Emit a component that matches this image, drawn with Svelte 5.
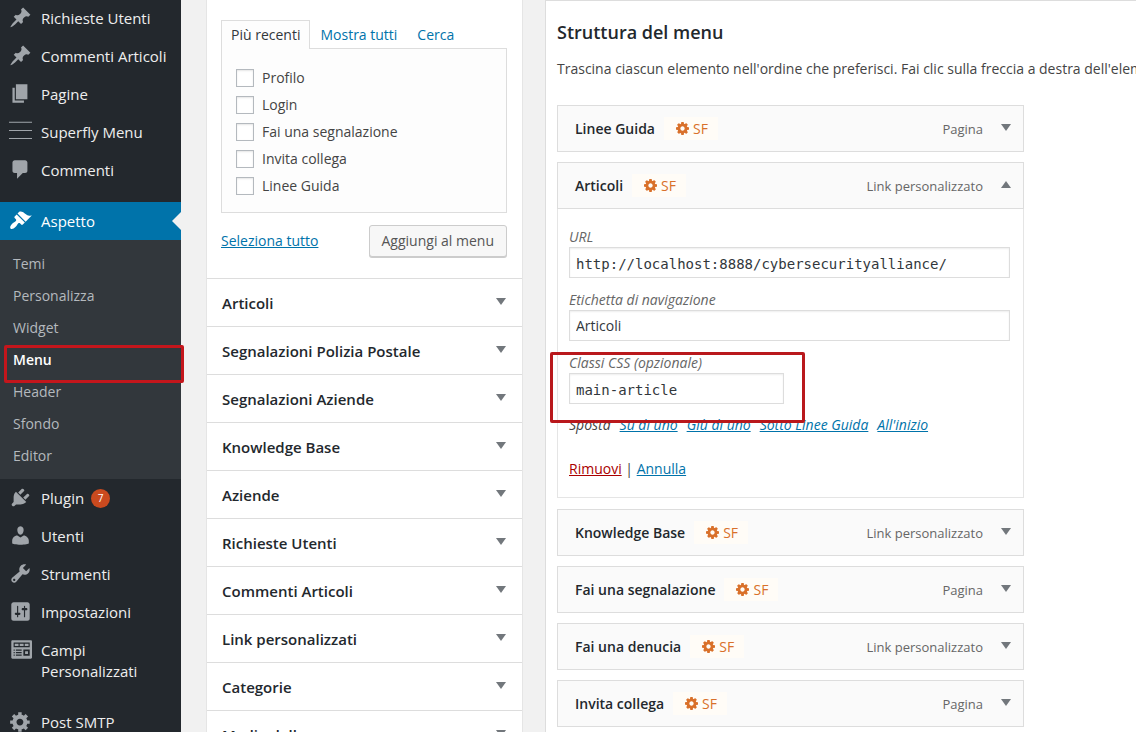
<script>
  const icons = {
    pin: 'M10.44 3.02l1.82-1.82 6.36 6.35-1.83 1.82c-1.05-.68-2.48-.57-3.41.36l-.75.75c-.92.93-1.04 2.35-.35 3.41l-1.83 1.82-2.41-2.41-2.8 2.79c-.42.42-3.38 2.71-3.8 2.29s1.86-3.39 2.28-3.81l2.79-2.79L4.1 9.36l1.83-1.82c1.05.69 2.48.57 3.4-.36l.75-.75c.93-.92 1.05-2.35.36-3.41z',
    page: 'M6 15V2h10v13H6zm-1 1h8v2H3V5h2v11z',
    lines: 'M0 1.5h20v.9H0zM0 8.6h20v.9H0zM0 15.7h20v.9H0z',
    comment: 'M5 2h9c1.1 0 2 .9 2 2v7c0 1.1-.9 2-2 2h-2l-5 5v-5H5c-1.1 0-2-.9-2-2V4c0-1.1.9-2 2-2z',
    brush: 'M14.48 11.06L7.41 3.99l1.5-1.5c.5-.56 2.3-.47 3.51.32 1.21.8 1.43 1.28 2.91 2.1 1.18.64 2.45 1.26 4.45.85zm-.71.71L6.7 4.7 4.93 6.47c-.39.39-.39 1.02 0 1.41l1.06 1.06c.39.39.39 1.03 0 1.42-.6.6-1.43 1.11-2.21 1.69-.35.26-.7.53-1.01.84C1.43 14.23.4 16.08 1.4 17.07c.99 1 2.84-.03 4.18-1.36.31-.31.58-.66.85-1.02.57-.78 1.08-1.61 1.69-2.21.39-.39 1.02-.39 1.41 0l1.06 1.06c.39.39 1.02.39 1.41 0z',
    plug: 'M13.11 4.36L9.87 7.6 8 5.73l3.24-3.24c.35-.34 1.05-.2 1.56.32.52.51.66 1.21.31 1.55zm-8 1.77l.91-1.12 9.01 9.01-1.19.84c-.71.71-2.63 1.16-3.82 1.16H6.14L4.9 17.26c-.59.59-1.54.59-2.12 0-.59-.58-.59-1.53 0-2.12l1.24-1.24v-3.88c0-1.13.4-3.19 1.09-3.89zm7.26 3.97l3.24-3.24c.34-.35 1.04-.21 1.55.31.52.51.66 1.21.31 1.55l-3.24 3.25z',
    user: 'M10 9.25c-2.27 0-2.73-3.44-2.73-3.44C7 4.02 7.82 2 9.97 2c2.16 0 2.98 2.02 2.71 3.81 0 0-.41 3.44-2.68 3.44zm0 2.57L12.72 10c2.39 0 4.52 2.33 4.52 4.53v2.49s-3.65 1.13-7.24 1.13c-3.65 0-7.24-1.13-7.24-1.13v-2.49c0-2.25 1.94-4.48 4.47-4.48z',
    wrench: 'M16.68 9.77c-1.34 1.34-3.3 1.67-4.95.99l-5.41 6.52c-.99.99-2.59.99-3.58 0s-.99-2.59 0-3.57l6.52-5.42c-.68-1.65-.35-3.61.99-4.95 1.28-1.28 3.12-1.62 4.72-1.06l-2.89 2.89 2.82 2.82 2.86-2.87c.53 1.58.18 3.39-1.08 4.65zM3.81 16.21c.4.39 1.04.39 1.43 0 .4-.4.4-1.04 0-1.43-.39-.4-1.03-.4-1.43 0-.39.39-.39 1.03 0 1.43z',
    sliders: 'M18 16V4c0-1.1-.9-2-2-2H4c-1.1 0-2 .9-2 2v12c0 1.1.9 2 2 2h12c1.1 0 2-.9 2-2zM8 11h1c.55 0 1 .45 1 1s-.45 1-1 1H8v1.5c0 .28-.22.5-.5.5s-.5-.22-.5-.5V13H6c-.55 0-1-.45-1-1s.45-1 1-1h1V5.5c0-.28.22-.5.5-.5s.5.22.5.5V11zm5-2h-1c-.55 0-1-.45-1-1s.45-1 1-1h1V5.5c0-.28.22-.5.5-.5s.5.22.5.5V7h1c.55 0 1 .45 1 1s-.45 1-1 1h-1v5.5c0 .28-.22.5-.5.5s-.5-.22-.5-.5V9z',
    widgets: 'M20 17V3c0-.55-.45-1-1-1H3c-.55 0-1 .45-1 1v14c0 .55.45 1 1 1h16c.55 0 1-.45 1-1zM4 4h14v4H4V4zm1 1v2h3.300V5H5zm4.300 0v2h3.400V5H9.300zm4.400 0v2H17V5h-3.300zM4 10h1v1H4zM6 10h5v1H6zM12.500 10H18v5.500h-5.500zM4 12.200h1v1H4zM6 12.200h5v1H6zM14 11.500v2.500h2.500v-2.500zM4 14.400h1v1H4zM6 14.400h5v1H6z',
    gear: 'M18 12h-2.180c-.17.7-.44 1.350-.81 1.930l1.540 1.540-2.100 2.100-1.540-1.540c-.58.36-1.230.63-1.910.79V19H8v-2.180c-.68-.16-1.330-.43-1.910-.79l-1.540 1.540-2.120-2.120 1.540-1.540c-.36-.58-.63-1.230-.79-1.910H1V9.030h2.170c.16-.7.44-1.350.8-1.940L2.430 5.550l2.100-2.100 1.540 1.540c.58-.37 1.240-.64 1.930-.81V2h3v2.180c.68.16 1.330.43 1.910.79l1.540-1.540 2.120 2.120-1.540 1.540c.36.59.64 1.240.8 1.940H18V12zm-8.500 1.500c1.660 0 3-1.340 3-3s-1.340-3-3-3-3 1.340-3 3 1.340 3 3 3z'
  };
  const cog = 'M1024 896q0-106-75-181t-181-75-181 75-75 181 75 181 181 75 181-75 75-181zm512-109v222q0 12-8 23t-20 13l-185 28q-19 54-39 91 35 50 107 138 10 12 10 25t-9 23q-27 37-99 108t-94 71q-12 0-26-9l-138-108q-44 23-91 38-16 136-29 186-7 28-36 28h-222q-14 0-24.500-8.500t-11.500-21.500l-28-184q-49-16-90-37l-141 107q-10 9-25 9-14 0-25-11-126-114-165-168-7-10-7-23 0-12 8-23 15-21 51-66.500t54-70.500q-27-50-41-99l-183-27q-13-2-21-12.500t-8-23.500v-222q0-12 8-23t19-13l186-28q14-46 39-92-40-57-107-138-10-12-10-24 0-10 9-23 26-36 98.500-107.500t94.500-71.500q13 0 26 10l138 107q44-23 91-38 16-136 29-186 7-28 36-28h222q14 0 24.500 8.500t11.500 21.500l28 184q49 16 90 37l142-107q9-9 24-9 13 0 25 10 129 119 165 170 7 8 7 22 0 12-8 23-15 21-51 66.500t-54 70.500q26 50 41 98l183 28q13 2 21 12.500t8 23.500z';

  const mainNav = [
    { label: 'Richieste Utenti', icon: 'pin' },
    { label: 'Commenti Articoli', icon: 'pin' },
    { label: 'Pagine', icon: 'page' },
    { label: 'Superfly Menu', icon: 'lines' },
    { label: 'Commenti', icon: 'comment' }
  ];
  const themeNav = ['Temi', 'Personalizza', 'Widget', 'Menu', 'Header', 'Sfondo', 'Editor'];
  const toolNav = [
    { label: 'Plugin', icon: 'plug', count: 7 },
    { label: 'Utenti', icon: 'user' },
    { label: 'Strumenti', icon: 'wrench' },
    { label: 'Impostazioni', icon: 'sliders' },
    { label: 'Campi Personalizzati', icon: 'widgets' }
  ];
  const recent = ['Profilo', 'Login', 'Fai una segnalazione', 'Invita collega', 'Linee Guida'];
  const sections = ['Articoli', 'Segnalazioni Polizia Postale', 'Segnalazioni Aziende', 'Knowledge Base', 'Aziende', 'Richieste Utenti', 'Commenti Articoli', 'Link personalizzati', 'Categorie', 'Media della'];
  const items = [
    { title: 'Linee Guida', type: 'Pagina' },
    { title: 'Articoli', type: 'Link personalizzato', open: true },
    { title: 'Knowledge Base', type: 'Link personalizzato' },
    { title: 'Fai una segnalazione', type: 'Pagina' },
    { title: 'Fai una denucia', type: 'Link personalizzato' },
    { title: 'Invita collega', type: 'Pagina' }
  ];
  const moves = ['Su di uno', 'Giù di uno', 'Sotto Linee Guida', "All'inizio"];
</script>

{#snippet navItem(item, current)}
  <li>
    <a class="nav-link" class:current href="#nav">
      <svg viewBox="0 0 20 20" class:wide={item.icon === 'lines'} aria-hidden="true"><path fill-rule="evenodd" d={icons[item.icon]} /></svg>
      <span class="nav-label">{item.label}</span>
      {#if item.count}<span class="count">{item.count}</span>{/if}
    </a>
    {#if current}
      <ul class="submenu">
        {#each themeNav as label}
          <li class:active={label === 'Menu'}><a href="#sub">{label}</a></li>
        {/each}
      </ul>
    {/if}
  </li>
{/snippet}

<div class="page">
  <nav class="sidebar">
    <ul>{#each mainNav as item}{@render navItem(item, false)}{/each}</ul>
    <ul>
      {@render navItem({ label: 'Aspetto', icon: 'brush' }, true)}
      {#each toolNav as item}{@render navItem(item, false)}{/each}
    </ul>
    <ul>{@render navItem({ label: 'Post SMTP', icon: 'gear' }, false)}</ul>
  </nav>

  <aside class="library">
    <div class="picker">
      <div class="tabs">
        <a class="tab selected" href="#recent">Più recenti</a>
        <a class="tab" href="#all">Mostra tutti</a>
        <a class="tab" href="#search">Cerca</a>
      </div>
      <div class="choices">
        {#each recent as label}
          <label><input type="checkbox" />{label}</label>
        {/each}
      </div>
      <div class="picker-actions">
        <a href="#select">Seleziona tutto</a>
        <button type="button" class="add">Aggiungi al menu</button>
      </div>
    </div>
    {#each sections as label}
      <button type="button" class="section"><span>{label}</span><i class="arrow"></i></button>
    {/each}
  </aside>

  <main class="structure">
    <h2>Struttura del menu</h2>
    <p class="hint">Trascina ciascun elemento nell'ordine che preferisci. Fai clic sulla freccia a destra dell'elemento</p>
    <ul class="items">
      {#each items as item}
        <li>
          <div class="bar">
            <span class="title">{item.title}</span>
            <button type="button" class="sf"><svg viewBox="0 128 1536 1536" aria-hidden="true"><path d={cog} /></svg>SF</button>
            <span class="type">{item.type}</span>
            <i class="arrow" class:up={item.open}></i>
          </div>
          {#if item.open}
            <div class="settings">
              <label for="url">URL</label>
              <input id="url" class="code" type="text" value="http://localhost:8888/cybersecurityalliance/" />
              <label for="nav-label">Etichetta di navigazione</label>
              <input id="nav-label" type="text" value="Articoli" />
              <div class="classes">
                <label for="css">Classi CSS (opzionale)</label>
                <input id="css" class="code" type="text" value="main-article" />
              </div>
              <p class="moves"><span>Sposta</span>{#each moves as move}<a href="#move">{move}</a>{/each}</p>
              <p class="remove"><a class="danger" href="#remove">Rimuovi</a> | <a href="#cancel">Annulla</a></p>
            </div>
          {/if}
        </li>
      {/each}
    </ul>
  </main>
</div>

<style>
  :global(body) { background: #f1f1f1; }
  .page {
    display: flex;
    height: 100vh;
    overflow: hidden;
    font: 14px/20px "Open Sans", "Noto Sans", sans-serif;
    color: #444;
  }
  .page * { box-sizing: border-box; }
  ul { list-style: none; margin: 0; padding: 0; }
  a { color: #0073aa; }

  .sidebar {
    flex: 0 0 181px;
    display: flex;
    flex-direction: column;
    gap: 13px;
    margin-top: -1px;
    background: #23282d;
  }
  .nav-link {
    position: relative;
    display: flex;
    align-items: flex-start;
    gap: 9px;
    padding: 9px 8px 8px 9px;
    font-size: 15px;
    line-height: 21px;
    color: #eee;
    text-decoration: none;
  }
  .nav-link svg { flex: none; width: 23px; height: 23px; margin: -2px 0 0; fill: #a0a5aa; }
  .nav-link .wide { overflow: visible; }
  .current { background: #0073aa; color: #fff; }
  .current svg { fill: #fff; }
  .current::after {
    content: "";
    position: absolute;
    right: 0;
    top: 10px;
    border: 9px solid transparent;
    border-left-width: 0;
    border-right-color: #f1f1f1;
  }
  .count {
    width: 19px;
    height: 19px;
    margin: 1px 0 0 -2px;
    border-radius: 50%;
    background: #ca4a1f;
    color: #fff;
    font-size: 10px;
    line-height: 19px;
    text-align: center;
  }
  .submenu { padding: 8px 0 7px; background: #32373c; }
  .submenu li { position: relative; }
  .submenu a { display: block; padding: 6px 13px; color: #b4b9be; text-decoration: none; }
  .submenu .active a { color: #fff; font-weight: 600; }
  .active::after {
    content: "";
    position: absolute;
    z-index: 1;
    inset: 1px -3px -7px 4px;
    border: 3px solid #c4161c;
    border-radius: 2px;
  }

  .library {
    flex: 0 0 317px;
    margin-left: 25px;
    background: #fff;
    border: solid #e5e5e5;
    border-width: 0 1px;
  }
  .picker { padding: 20px 15px 21px 14px; }
  .tabs { display: flex; }
  .tab { padding: 4px 9px 3px; border: 1px solid transparent; border-bottom: 0; text-decoration: none; }
  .tab.selected { margin-bottom: -1px; padding-bottom: 4px; border-color: #ddd; background: #fdfdfd; color: #32373c; }
  .choices {
    display: flex;
    flex-direction: column;
    gap: 7px;
    padding: 19px 14px 16px;
    border: 1px solid #ddd;
    background: #fdfdfd;
  }
  .tab.selected { position: relative; }
  .choices label { display: flex; align-items: center; gap: 8px; }
  input[type="checkbox"] {
    appearance: none;
    width: 18px;
    height: 18px;
    margin: 0;
    border: 1px solid #b4b9be;
    background: #fff;
    box-shadow: inset 0 1px 2px rgba(0, 0, 0, 0.1);
  }
  .picker-actions { display: flex; align-items: center; justify-content: space-between; padding-top: 12px; }
  .add {
    height: 32px;
    padding: 0 12px;
    border: 1px solid #ccc;
    border-radius: 3px;
    background: #f7f7f7;
    box-shadow: 0 1px 0 #ccc;
    font: inherit;
    color: #555;
  }
  .section {
    display: flex;
    align-items: center;
    justify-content: space-between;
    width: 100%;
    height: 48px;
    padding: 0 16px 0 15px;
    border: 0;
    border-top: 1px solid #ddd;
    background: #fff;
    font: 600 15px/20px "Open Sans", "Noto Sans", sans-serif;
    color: #23282d;
    text-align: left;
  }
  .arrow { flex: none; border: solid transparent; border-width: 7px 5px 0; border-top-color: #72777c; }
  .arrow.up { border-width: 0 5px 7px; border-bottom-color: #72777c; }
  .section .arrow { margin-bottom: 2px; }

  .structure {
    flex: 1;
    min-width: 0;
    margin-left: 22px;
    padding: 19px 0 0 11px;
    border: solid #ddd;
    border-width: 1px 0 0 1px;
    background: #fff;
  }
  h2 { margin: 0; font-size: 18px; line-height: 24px; font-weight: 600; color: #23282d; }
  .hint { margin: 15px 0 26px; white-space: nowrap; }
  .items { display: grid; gap: 10px; max-width: 467px; }
  .bar {
    display: flex;
    align-items: center;
    height: 47px;
    padding: 0 12px 0 17px;
    border: 1px solid #ddd;
    background: #fafafa;
  }
  .title { font-weight: 600; color: #23282d; }
  .sf {
    display: flex;
    align-items: center;
    gap: 4px;
    height: 23px;
    margin-left: 9px;
    padding: 0 10px 0 12px;
    border: 0;
    background: #fffcf7;
    font: inherit;
    color: #d9702a;
  }
  .sf svg { width: 13px; height: 13px; fill: #d9702a; }
  .type { margin-left: auto; padding-right: 18px; color: #666; font-size: 13px; }
  .bar .arrow { margin-bottom: 3px; }
  .settings {
    display: flex;
    flex-direction: column;
    margin-bottom: 1px;
    padding: 18px 13px 18px 11px;
    border: 1px solid #e5e5e5;
    border-top: 0;
  }
  .settings label { font-style: italic; color: #666; }
  .settings input {
    width: 100%;
    height: 31px;
    margin: 0 0 12px;
    padding: 0 6px;
    border: 1px solid #ddd;
    background: #fff;
    box-shadow: inset 0 1px 2px rgba(0, 0, 0, 0.07);
    font: inherit;
    color: #32373c;
  }
  .settings .code { padding-top: 3px; font-family: "DejaVu Sans Mono", monospace; }
  .classes { position: relative; width: 215px; }
  .settings .classes input { display: block; margin-bottom: 11px; }
  .classes::after {
    content: "";
    position: absolute;
    inset: -1px -21px -8px -19px;
    border: 3px solid #b9181c;
    border-radius: 2px;
    pointer-events: none;
  }
  .classes label { display: block; }
  .settings p { margin: 0; }
  .moves { display: flex; gap: 9px; font-style: italic; }
  .settings .remove { margin-top: 24px; }
  .danger { color: #a00; }
</style>
